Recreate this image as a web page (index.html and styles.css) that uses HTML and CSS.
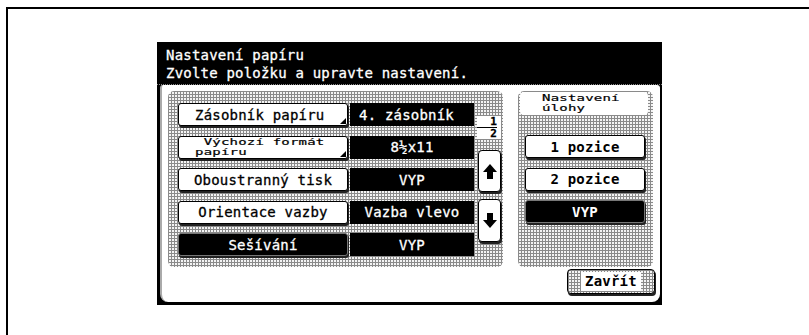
FILE: index.html
```html
<!DOCTYPE html>
<html lang="cs">
<head>
    <meta charset="UTF-8">
    <meta name="viewport" content="width=device-width, initial-scale=1.0">
    <title>Nastavení papíru</title>
    <link rel="stylesheet" href="styles.css">
</head>
<body>
    <div class="frame">
        <div class="screen">
            <div class="title">
                <div>Nastavení papíru</div>
                <div>Zvolte položku a upravte nastavení.</div>
            </div>

            <div class="content">
                <div class="panels">
                    <!-- settings list -->
                    <div class="panel list-panel halftone">
                        <div class="rows">
                            <div class="row">
                                <div class="btn sub first">Zásobník papíru</div>
                                <div class="value first">4. zásobník</div>
                            </div>
                            <div class="row">
                                <div class="btn sub two-line"><span class="small">&nbsp;Výchozí formát<br>papíru</span></div>
                                <div class="value">8½x11</div>
                            </div>
                            <div class="row">
                                <div class="btn">Oboustranný tisk</div>
                                <div class="value">VYP</div>
                            </div>
                            <div class="row">
                                <div class="btn">Orientace vazby</div>
                                <div class="value">Vazba vlevo</div>
                            </div>
                            <div class="row">
                                <div class="btn selected">Sešívání</div>
                                <div class="value">VYP</div>
                            </div>
                        </div>

                        <div class="side">
                            <div class="pager">
                                <span>1</span>
                                <span>2</span>
                            </div>
                            <div class="arrow-btn up">
                                <svg width="14" height="15" viewBox="0 0 14 15"><path d="M7 0 L14 8 H10 V15 H4 V8 H0 Z" fill="#000"/></svg>
                            </div>
                            <div class="arrow-btn down">
                                <svg width="14" height="15" viewBox="0 0 14 15"><path d="M7 15 L14 7 H10 V0 H4 V7 H0 Z" fill="#000"/></svg>
                            </div>
                        </div>
                    </div>

                    <!-- job setting -->
                    <div class="panel job-panel halftone">
                        <div class="label-box"><span class="small">Nastavení<br>úlohy</span></div>
                        <div class="options">
                            <div class="btn option">1 pozice</div>
                            <div class="btn option">2 pozice</div>
                            <div class="btn option selected">VYP</div>
                        </div>
                    </div>
                </div>

                <div class="footer">
                    <div class="close-btn halftone"><span>Zavřít</span></div>
                </div>
            </div>
        </div>
    </div>
</body>
</html>
```

FILE: styles.css
```css
* {
    margin: 0;
    padding: 0;
    box-sizing: border-box;
}

html, body {
    height: 100%;
    overflow: hidden;
    background: #fff;
}

body {
    font-family: "DejaVu Sans Mono", "Liberation Mono", monospace;
    font-size: 14px;
    letter-spacing: 0.2px;
    color: #000;
    -webkit-text-stroke: 0.3px currentColor;
}

.frame {
    margin: 7px 0 0 6px;
    height: 328px;
    border-top: 2px solid #000;
    border-left: 2px solid #000;
    padding: 33px 0 0 149px;
}

.screen {
    width: 505px;
    height: 263px;
    background: #000;
    padding: 0 2px 3px 3px;
}

.title {
    height: 43px;
    margin-left: -3px;
    margin-right: -2px;
    padding: 4px 0 0 9px;
    color: #fff;
    line-height: 18px;
    border-bottom: 1px dotted #888;
}

.content {
    height: 217px;
    background: #fff;
    border-left: 2px solid #aaa;
    border-radius: 3px 3px 8px 8px;
    padding: 6px 7px 0 6px;
}

.halftone {
    background-color: #f4f4f4;
    background-image:
        linear-gradient(90deg, #8a8a8a 1px, transparent 1px),
        linear-gradient(#8a8a8a 1px, transparent 1px);
    background-size: 3px 3px;
}

.panels {
    display: flex;
    gap: 15px;
    height: 176px;
}

.panel {
    border-radius: 6px;
}

.list-panel {
    width: 335px;
    display: flex;
    padding: 12px 0 0 10px;
}

.rows {
    display: flex;
    flex-direction: column;
    gap: 9.5px;
}

.row {
    display: flex;
    gap: 2px;
    height: 23px;
}

.btn {
    position: relative;
    display: flex;
    align-items: center;
    justify-content: center;
    background: #fff;
    border: 1px solid #000;
    border-radius: 3px;
    box-shadow: 1px 2px 0 #222;
    white-space: nowrap;
}

.row .btn {
    width: 170px;
}

.btn.first {
    justify-content: flex-start;
    padding-left: 16px;
}

.btn.selected {
    background: #000;
    color: #fff;
    border-color: #777;
}

/* little corner mark = opens a submenu */
.btn.sub::after {
    content: "";
    position: absolute;
    right: 1px;
    bottom: 1px;
    border-left: 6px solid transparent;
    border-bottom: 6px solid #000;
}

.btn.two-line {
    justify-content: flex-start;
    padding-left: 16px;
}

.small {
    display: inline-block;
    line-height: 16.4px;
    transform: scaleY(0.6);
    white-space: nowrap;
}

.value {
    width: 124px;
    background: #000;
    color: #fff;
    display: flex;
    align-items: center;
    justify-content: center;
    white-space: nowrap;
}

.value.first {
    justify-content: flex-start;
    padding-left: 9px;
}

.side {
    width: 24px;
    margin-left: 3px;
    display: flex;
    flex-direction: column;
}

.pager {
    margin-top: 13px;
    height: 23px;
    background: #fff;
    display: flex;
    flex-direction: column;
    font-size: 11px;
    font-weight: bold;
    line-height: 11px;
    text-align: right;
    padding-right: 4px;
}

.pager span:first-child {
    border-bottom: 1px solid #000;
}

.arrow-btn {
    width: 23px;
    margin-left: 1px;
    background: #fff;
    border: 1px solid #000;
    border-radius: 4px;
    box-shadow: 1px 2px 0 #222;
    display: flex;
    align-items: center;
    justify-content: center;
}

.arrow-btn.up {
    margin-top: 11px;
    height: 42px;
}

.arrow-btn.down {
    margin-top: 7px;
    height: 43px;
}

.job-panel {
    width: 135px;
    padding: 1px 0 0 2px;
}

.label-box {
    width: 128px;
    height: 23px;
    background: #fff;
    border-radius: 4px;
    padding-left: 22px;
    display: flex;
    align-items: center;
}

.options {
    margin: 20px 0 0 5px;
    display: flex;
    flex-direction: column;
    gap: 9.5px;
}

.option {
    width: 120px;
    height: 23px;
    font-weight: bold;
    -webkit-text-stroke: 0;
}

.footer {
    display: flex;
    justify-content: flex-end;
    margin: 2px -2px 0 0;
}

.close-btn {
    width: 88px;
    height: 25px;
    border: 1px solid #000;
    border-radius: 4px;
    box-shadow: 1px 2px 0 #222;
    display: flex;
    align-items: center;
    justify-content: center;
    font-weight: bold;
    -webkit-text-stroke: 0;
}

.close-btn span {
    background: #fff;
    padding: 0 4px;
    line-height: 19px;
}
```
